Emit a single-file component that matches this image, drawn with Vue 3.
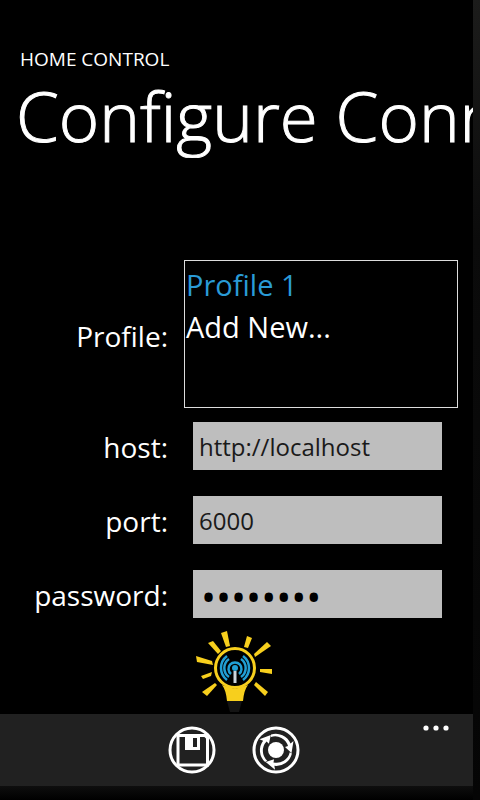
<script setup>
import { ref } from 'vue'

const profiles = ['Profile 1', 'Add New...']
const selected = ref('Profile 1')
const host = ref('http://localhost')
const port = ref('6000')
const password = ref('password')
</script>

<template>
  <div class="phone">
    <main class="page">
      <header class="heading">
        <p class="app-name">HOME CONTROL</p>
        <h1 class="title">Configure Connection</h1>
      </header>

      <form class="form" @submit.prevent>
        <span id="profile-label" class="label">Profile:</span>
        <div class="list" role="listbox" aria-labelledby="profile-label">
          <button
            v-for="p in profiles"
            :key="p"
            type="button"
            role="option"
            class="item"
            :class="{ active: p === selected }"
            :aria-selected="p === selected"
            @click="selected = p"
          >{{ p }}</button>
        </div>

        <label class="label" for="host">host:</label>
        <input id="host" v-model="host" class="field" type="text" />

        <label class="label" for="port">port:</label>
        <input id="port" v-model="port" class="field" type="text" />

        <label class="label" for="password">password:</label>
        <input id="password" v-model="password" class="field secret" type="password" autocomplete="off" />
      </form>

      <svg class="bulb" viewBox="0 0 80 84" aria-hidden="true">
        <g fill="#f7cf1d">
          <path d="M25 3l6-2 3 15-4 1z" />
          <path d="M12 13l5-2 8 10-3 3z" />
          <path d="M0 26l1 6 16 3-1-4z" />
          <path d="M5 46l11-4-1 4-8 3z" />
          <path d="M6 62l5 4 10-11-2-2z" />
          <path d="M51 6l5 2-4 10-4-1z" />
          <path d="M71 12l4 4-16 11-1-3z" />
          <path d="M64 39l12 0v5l-12-2z" />
          <path d="M60 52l12 10-3 4-11-11z" />
          <path d="M26 55q4 5 5 16h16q1-11 5-16l-13 4z" />
        </g>
        <circle cx="39" cy="38" r="19.500" fill="#000" stroke="#f7cf1d" stroke-width="3" />
        <path d="M31 71h15l-3 11h-9z" fill="#141414" />
        <g fill="none" stroke="#219fd5" stroke-width="2.500">
          <path d="M35 44a6.500 6.500 0 1 1 8 0" />
          <path d="M33 29a11 11 0 0 0 0 18M45 29a11 11 0 0 1 0 18" />
          <path d="M31 26a15 15 0 0 0 0 24M47 26a15 15 0 0 1 0 24" />
        </g>
        <circle cx="39" cy="38" r="3" fill="#219fd5" />
        <path d="M39 41v12" stroke="#ccd5dc" stroke-width="3" />
      </svg>
    </main>

    <footer class="appbar">
      <button class="round" type="button" aria-label="Save">
        <svg viewBox="0 0 48 48" aria-hidden="true">
          <circle cx="24" cy="24" r="22" fill="none" stroke="#fff" stroke-width="3" />
          <path d="M10 9.500h27l2.500 2.500v27H10z" fill="none" stroke="#fff" stroke-width="3" />
          <path d="M17 9h15v15H17z" fill="#fff" />
          <path d="M25 12h4v9h-4z" fill="#212121" />
        </svg>
      </button>
      <button class="round" type="button" aria-label="Test connection">
        <svg viewBox="0 0 48 48" aria-hidden="true">
          <circle cx="24" cy="24" r="22" fill="none" stroke="#fff" stroke-width="3" />
          <circle cx="24" cy="24" r="8" fill="#fff" />
          <g fill="#fff">
            <path
              v-for="angle in [0, 120, 240]"
              :key="angle"
              d="M19 8.500A16 16 0 0 1 38.500 17.500L41.500 15L39.500 27L33 21L36 20A13.500 13.500 0 0 0 19 11z"
              :transform="`rotate(${angle} 24 24)`"
            />
          </g>
        </svg>
      </button>
      <button class="more" type="button" aria-label="More">
        <svg viewBox="0 0 26 6" aria-hidden="true">
          <g fill="#fff">
            <circle cx="3" cy="3" r="2.600" />
            <circle cx="13" cy="3" r="2.600" />
            <circle cx="23" cy="3" r="2.600" />
          </g>
        </svg>
      </button>
    </footer>
  </div>
</template>

<style>
body {
  margin: 0;
  background: #000;
}
</style>

<style scoped>
.phone {
  box-sizing: border-box;
  display: flex;
  flex-direction: column;
  min-height: 100vh;
  padding: 0 7px 14px 0;
  background: linear-gradient(#1c1c1b, #0b0b0b 240px, #050505) right / 7px 100% no-repeat, linear-gradient(#0e0e0e, #000) bottom / 100% 14px no-repeat, #000;
  color: #fff;
  font-family: "Open Sans", "Noto Sans", sans-serif;
}

.page {
  flex: 1;
  display: flex;
  flex-direction: column;
  background: #000;
}

.heading {
  padding: 46px 0 0 16px;
  overflow: hidden;
}

.app-name {
  margin: 0 0 0 4px;
  font-size: 19px;
  line-height: 26px;
}

.title {
  margin: 0;
  font-size: 69px;
  font-weight: 300;
  line-height: 86px;
  white-space: nowrap;
  -webkit-text-stroke: 1px #fff;
}

.form {
  display: grid;
  grid-template-columns: 168px 1fr;
  column-gap: 16px;
  align-items: center;
  padding: 102px 15px 0 0;
}

.label {
  padding-top: 4px;
  font-size: 28px;
  line-height: 40px;
  text-align: right;
}

.list {
  box-sizing: border-box;
  min-height: 148px;
  border: 1px solid #ddd;
  display: flex;
  flex-direction: column;
  padding-top: 3px;
}

.item {
  padding: 0 0 0 1px;
  border: 0;
  background: none;
  color: #fff;
  font: inherit;
  font-size: 29px;
  line-height: 42px;
  text-align: left;
}

.item.active {
  color: #2a9bd6;
}

.field {
  box-sizing: border-box;
  min-width: 0;
  height: 48px;
  margin: 14px 16px 12px 9px;
  padding: 0 6px;
  border: 0;
  border-radius: 0;
  background: #bebebe;
  color: #1a1a1a;
  font: inherit;
  font-size: 24px;
}

.secret {
  padding: 4px 8px 0;
  color: #000;
  font-size: 40px;
}

.bulb {
  width: 80px;
  height: 84px;
  margin: 0 0 0 196px;
}

.appbar {
  position: relative;
  display: flex;
  justify-content: center;
  gap: 36px;
  padding: 12px 6px 12px 0;
  background: #212121;
}

.round {
  width: 48px;
  height: 48px;
  padding: 0;
  border: 0;
  background: none;
}

.round svg,
.more svg {
  display: block;
  width: 100%;
}

.more {
  position: absolute;
  top: 11px;
  right: 24px;
  width: 26px;
  padding: 0;
  border: 0;
  background: none;
}
</style>
